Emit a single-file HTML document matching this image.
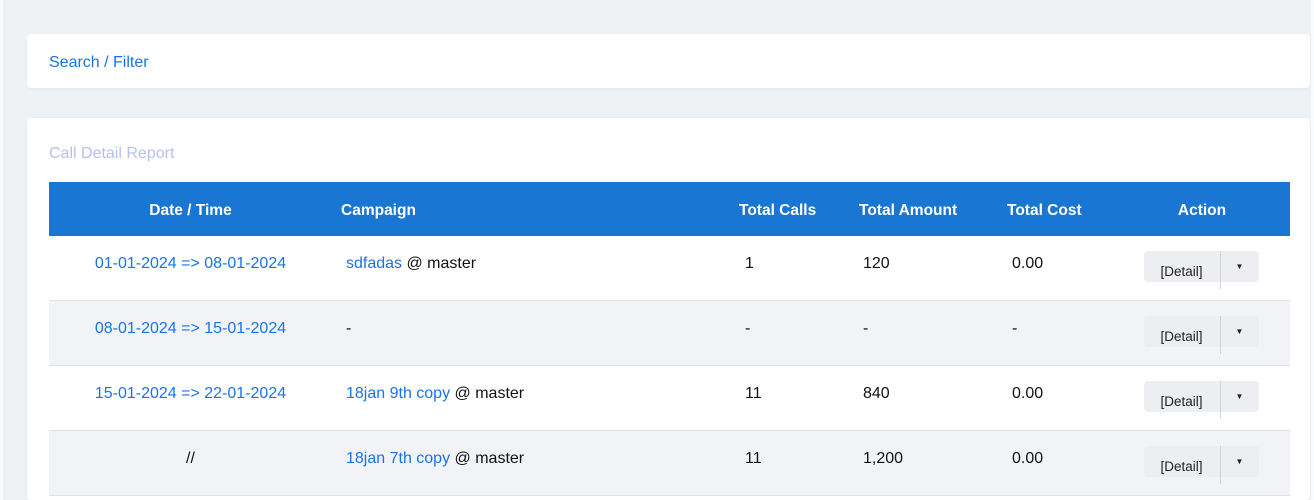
<!DOCTYPE html>
<html style="overflow:hidden;height:500px"><head><style>
body{margin:0;width:1314px;height:500px;overflow:hidden;background:#eef2f5;font-family:"Liberation Sans",sans-serif;position:relative}
.lstrip{position:absolute;left:0;top:0;width:3px;height:500px;background:#f7f9fa}
.rstrip{position:absolute;left:1311px;top:0;width:3px;height:500px;background:#fafbfc}
.card{position:absolute;left:27px;width:1283px;background:#fff;border-radius:4px;box-shadow:0 1px 4px rgba(0,0,0,.04)}
.blue{color:#1a73e8}
table{position:absolute;left:22px;top:64px;width:1241px;border-collapse:collapse;font-size:16px}
th{background:#1976d2;color:#fff;height:50px;font-weight:bold;padding:4px 0 0 0;text-align:left;font-size:15.5px}
td{height:56px;padding:0 0 8px 0;border-bottom:1px solid #dee2e6;color:#111}
tr.g td{background:#f2f3f7}
.btn{display:inline-flex;height:31px;background:#eceef2;border-radius:4px;font-size:13.5px;align-items:center;color:#222;margin-top:5px}
.btn span:first-child{width:76px;text-align:center;border-right:1px solid #cfd2d7;height:38px;line-height:42px;margin-top:6px}
.btn span:last-child{width:38px;text-align:center;font-size:8px}
</style></head><body>
<div class="lstrip"></div><div class="rstrip"></div>
<div class="card" style="top:34px;height:54px"><div class="blue" style="position:absolute;left:22px;top:20px;font-size:16px">Search / Filter</div></div>
<div class="card" style="top:118px;height:382px">
<div style="position:absolute;left:22px;top:27px;font-size:16px;color:#b7bff0">Call Detail Report</div>
<table>
<tr><th style="width:283px;text-align:center">Date / Time</th><th style="width:398px;padding-left:9px">Campaign</th><th style="width:120px">Total Calls</th><th style="width:148px">Total Amount</th><th style="width:115px">Total Cost</th><th style="text-align:center;padding-right:8px">Action</th></tr>
<tr><td style="text-align:center" class="blue">01-01-2024 =&gt; 08-01-2024</td><td style="padding-left:14px"><span class="blue">sdfadas</span> @ master</td><td style="padding-left:6px">1</td><td style="padding-left:4px">120</td><td style="padding-left:5px">0.00</td><td style="text-align:center;padding-right:10px"><div class="btn"><span>[Detail]</span><span>▼</span></div></td></tr>
<tr class="g"><td style="text-align:center" class="blue">08-01-2024 =&gt; 15-01-2024</td><td style="padding-left:14px">-</td><td style="padding-left:6px">-</td><td style="padding-left:4px">-</td><td style="padding-left:5px">-</td><td style="text-align:center;padding-right:10px"><div class="btn"><span>[Detail]</span><span>▼</span></div></td></tr>
<tr><td style="text-align:center" class="blue">15-01-2024 =&gt; 22-01-2024</td><td style="padding-left:14px"><span class="blue">18jan 9th copy</span> @ master</td><td style="padding-left:6px">11</td><td style="padding-left:4px">840</td><td style="padding-left:5px">0.00</td><td style="text-align:center;padding-right:10px"><div class="btn"><span>[Detail]</span><span>▼</span></div></td></tr>
<tr class="g"><td style="text-align:center">//</td><td style="padding-left:14px"><span class="blue">18jan 7th copy</span> @ master</td><td style="padding-left:6px">11</td><td style="padding-left:4px">1,200</td><td style="padding-left:5px">0.00</td><td style="text-align:center;padding-right:10px"><div class="btn"><span>[Detail]</span><span>▼</span></div></td></tr>
</table>
</div>
</body></html>
